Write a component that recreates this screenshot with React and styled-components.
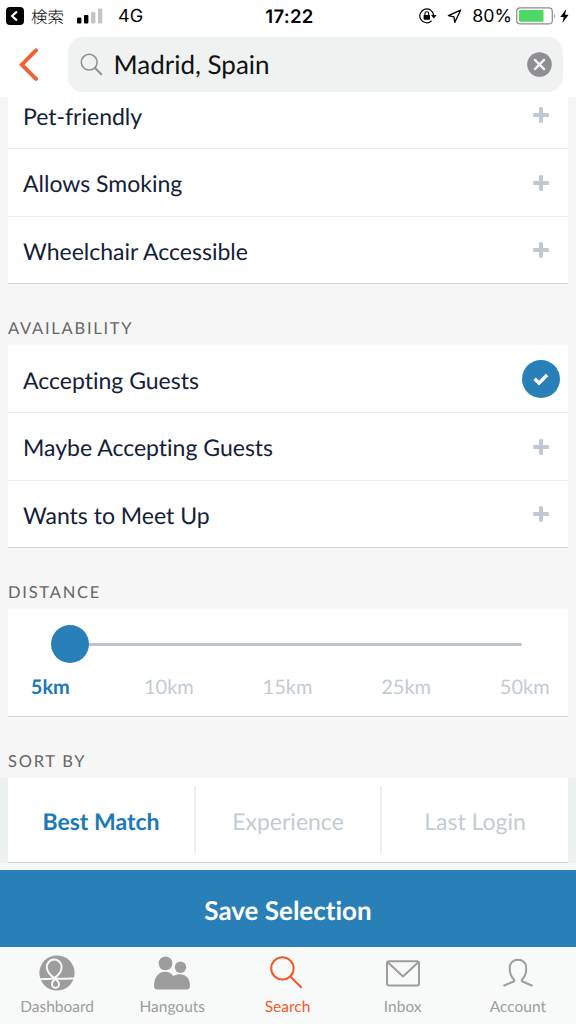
import { useState } from "react";
import styled, { createGlobalStyle } from "styled-components";

const amenities = ["Pet-friendly", "Allows Smoking", "Wheelchair Accessible"];
const availability = [
    "Accepting Guests",
    "Maybe Accepting Guests",
    "Wants to Meet Up",
];
const distances = ["5km", "10km", "15km", "25km", "50km"];
const sorts = ["Best Match", "Experience", "Last Login"];

const StatusBar = () => (
    <StatusContainer>
        <StatusLeft>
            <svg width="18" height="18" viewBox="0 0 18 18">
                <rect width="18" height="18" rx="4" fill="#000" />
                <path
                    d="M10.9 4.6 6 9l4.9 4.4"
                    fill="none"
                    stroke="#fff"
                    strokeWidth="2.1"
                />
            </svg>
            <BackApp>検索</BackApp>
            <svg width="26" height="16" viewBox="0 0 26 16">
                <rect x="0" y="9.5" width="4.4" height="6" rx="1" />
                <rect x="7" y="7" width="4.4" height="8.5" rx="1" />
                <rect x="14" y="4" width="4.4" height="11.5" rx="1" fill="#c4c4c4" />
                <rect x="20.9" y="0.5" width="4.4" height="15" rx="1" fill="#c4c4c4" />
            </svg>
            <Network>4G</Network>
        </StatusLeft>
        <Clock>17:22</Clock>
        <StatusRight>
            <svg width="18" height="16" viewBox="0 0 18 16">
                <path
                    d="M14.6 7.2A6.9 6.9 0 1 0 12.6 12.8"
                    fill="none"
                    stroke="#000"
                    strokeWidth="1.2"
                />
                <path d="M12 7h5.6l-2.8 3.6z" />
                <rect x="4.6" y="7" width="6.4" height="4.7" rx="0.6" />
                <path
                    d="M5.9 7.4V5.6a1.9 1.9 0 0 1 3.8 0v1.8"
                    fill="none"
                    stroke="#000"
                    strokeWidth="1.1"
                />
            </svg>
            <Arrow width="15" height="15" viewBox="0 0 15 15">
                <path
                    d="M13.6 1.2 1.4 6.6l5.6 1.2.7 5.6z"
                    fill="none"
                    stroke="#000"
                    strokeWidth="1.3"
                    strokeLinejoin="round"
                />
            </Arrow>
            <Percent>80%</Percent>
            <svg width="40" height="18" viewBox="0 0 40 18">
                <rect
                    x="0.7"
                    y="0.9"
                    width="35.6"
                    height="16"
                    rx="3.5"
                    fill="#fff"
                    stroke="#8c8c8c"
                    strokeWidth="1.2"
                />
                <rect x="3" y="3" width="24.5" height="11.8" rx="1" fill="#4cd964" />
                <path d="M38 6.2q1.8 2.8 0 5.6z" fill="#777" />
            </svg>
            <Bolt width="9" height="14" viewBox="0 0 9 14">
                <path d="M6.2 0 .3 8h3.4L2.4 14 8.6 5.8H5.1z" />
            </Bolt>
        </StatusRight>
    </StatusContainer>
);

const PlusIcon = () => (
    <svg width="16" height="16" viewBox="0 0 16 16">
        <path d="M8 0.2v15.6M0.2 8h15.6" stroke="#bfc9d1" strokeWidth="4" />
    </svg>
);

const CheckIcon = () => (
    <svg width="16" height="13" viewBox="0 0 16 13">
        <path
            d="M1.7 5.8 6 10.1 14.1 2"
            fill="none"
            stroke="#fff"
            strokeWidth="3.4"
        />
    </svg>
);

const OptionList = ({ options, selected, onToggle }) => (
    <Card>
        {options.map((option) => (
            <OptionRow key={option} onClick={() => onToggle(option)}>
                <span>{option}</span>
                <Toggle $checked={selected.includes(option)}>
                    {selected.includes(option) ? <CheckIcon /> : <PlusIcon />}
                </Toggle>
            </OptionRow>
        ))}
    </Card>
);

const icons = {
    Dashboard: (
        <svg width="36" height="36" viewBox="0 0 36 36">
            <circle cx="18" cy="18" r="17.6" fill="#9d9d9d" />
            <path
                d="M1 24.2C7 23.8 12 24.4 15.4 22.8C19 20.6 22.6 16.5 22.6 12A7.4 7.4 0 0 0 7.8 12C7.8 16.500 11.500 20.200 14.600 22.600C17.500 24.600 20 26.700 20 29.300A3.500 3.500 0 0 1 13 29.300C13 26.700 15 24.600 17.800 23.500C22 24.200 28 23.700 35 23.400"
                fill="none"
                stroke="#f8f8f8"
                strokeWidth="2"
            />
        </svg>
    ),
    Hangouts: (
        <svg width="36" height="36" viewBox="0 0 36 36" fill="#9d9d9d">
            <circle cx="11.5" cy="8.3" r="6.9" />
            <circle cx="26.5" cy="12.2" r="5.7" />
            <path d="M0 31C0 22.5 4.5 16.8 11 16.8c3.6 0 6.5 1.5 8.4 4.2 1.800-1.200 4-1.700 6.300-1.700 6 0 10.300 4 10.300 11.700q0 3.400-3.400 3.400H3.400Q0 34.400 0 31z" />
        </svg>
    ),
    Search: (
        <svg width="36" height="36" viewBox="0 0 36 36">
            <g fill="none" stroke="#f1592a" strokeWidth="2" strokeLinecap="round">
                <circle cx="13.4" cy="13.4" r="11.2" />
                <path d="m21.3 21.5 10.9 10.7" />
            </g>
        </svg>
    ),
    Inbox: (
        <svg width="36" height="36" viewBox="0 0 36 36">
            <g
                fill="none"
                stroke="#9d9d9d"
                strokeWidth="2"
                strokeLinejoin="round"
            >
                <rect x="2" y="6.3" width="32" height="24.2" rx="2.2" />
                <path d="M3 7.5 18 21.5 33 7.5" />
            </g>
        </svg>
    ),
    Account: (
        <svg width="36" height="36" viewBox="0 0 36 36">
            <path
                d="M4.3 30.5 13.5 26.5C14.8 25.9 14.5 25 13.7 24.2C11 21.5 9.8 18.5 9.8 14.5V12.3C9.8 8 13 4.8 18 4.8S26.2 8 26.2 12.3V14.5C26.2 18.5 25 21.5 22.3 24.2C21.5 25 21.2 25.9 22.5 26.5L31.7 30.5"
                fill="none"
                stroke="#9d9d9d"
                strokeWidth="2"
                strokeLinecap="round"
            />
        </svg>
    ),
};

const App = () => {
    const [selected, setSelected] = useState(["Accepting Guests"]);
    const [distance, setDistance] = useState(0);
    const [sort, setSort] = useState("Best Match");
    const [tab, setTab] = useState("Search");

    const handleToggle = (option) => {
        setSelected((prev) =>
            prev.includes(option)
                ? prev.filter((item) => item !== option)
                : [...prev, option]
        );
    };

    return (
        <Container>
            <GlobalStyle />
            <StatusBar />
            <Header>
                <svg width="20" height="34" viewBox="0 0 20 34">
                    <path
                        d="M17 2.4 2.8 16.7 17 30.8"
                        fill="none"
                        stroke="#ef6237"
                        strokeWidth="4"
                        strokeLinecap="round"
                    />
                </svg>
                <SearchBox>
                    <svg width="23" height="23" viewBox="0 0 23 23">
                        <g fill="none" stroke="#8e8e93" strokeLinecap="round">
                            <circle cx="9.2" cy="9.2" r="7.9" strokeWidth="1.5" />
                            <path d="m15 15 6.2 6.2" strokeWidth="2" />
                        </g>
                    </svg>
                    <Query>Madrid, Spain</Query>
                    <svg width="25" height="25" viewBox="0 0 25 25">
                        <circle cx="12.5" cy="12.5" r="12.3" fill="#8e8e93" />
                        <path
                            d="m7.9 7.9 9.2 9.2m0-9.2-9.2 9.2"
                            stroke="#f3f4f4"
                            strokeWidth="2.3"
                            strokeLinecap="round"
                        />
                    </svg>
                </SearchBox>
            </Header>
            <Filters>
                <OptionList
                    options={amenities}
                    selected={selected}
                    onToggle={handleToggle}
                />
                <Label>AVAILABILITY</Label>
                <OptionList
                    options={availability}
                    selected={selected}
                    onToggle={handleToggle}
                />
                <Label>DISTANCE</Label>
                <DistanceCard>
                    <Slider>
                        <Track />
                        <Thumb style={{ left: `${distance * 25}%` }} />
                    </Slider>
                    <Stops>
                        {distances.map((label, i) => (
                            <Stop
                                key={label}
                                $active={i === distance}
                                onClick={() => setDistance(i)}
                            >
                                {label}
                            </Stop>
                        ))}
                    </Stops>
                </DistanceCard>
                <Label>SORT BY</Label>
                <SortBand>
                    <SortCard>
                        {sorts.map((label) => (
                            <SortItem
                                key={label}
                                $active={label === sort}
                                onClick={() => setSort(label)}
                            >
                                {label}
                            </SortItem>
                        ))}
                    </SortCard>
                </SortBand>
            </Filters>
            <SaveButton>Save Selection</SaveButton>
            <TabBar>
                {Object.keys(icons).map((name) => (
                    <Tab
                        key={name}
                        $active={name === tab}
                        onClick={() => setTab(name)}
                    >
                        {icons[name]}
                        <span>{name}</span>
                    </Tab>
                ))}
            </TabBar>
        </Container>
    );
};

export default App;

const GlobalStyle = createGlobalStyle`
    * {
        box-sizing: border-box;
    }

    body {
        margin: 0;
        font-family: Lato, "Noto Sans CJK JP", sans-serif;
        font-variant-ligatures: none;
        text-rendering: geometricPrecision;
    }

    button {
        border: none;
        padding: 0;
        background: none;
        font-family: inherit;
        font-variant-ligatures: inherit;
        text-rendering: inherit;
    }

    svg {
        display: block;
        flex-shrink: 0;
    }
`;

const Container = styled.div`
    display: flex;
    flex-direction: column;
    width: 576px;
    height: 1024px;
    overflow: hidden;
    background: #fff;
`;

const StatusContainer = styled.div`
    display: grid;
    grid-template-columns: 1fr auto 1fr;
    align-items: center;
    height: 32px;
    padding: 0 7px 0 6px;
    font-family: Inter, "Noto Sans CJK JP", sans-serif;
    color: #000;
`;

const StatusLeft = styled.div`
    display: flex;
    align-items: center;
`;

const StatusRight = styled.div`
    display: flex;
    align-items: center;
    justify-content: flex-end;
`;

const BackApp = styled.span`
    margin: 0 13px 0 7px;
    font-family: "Noto Sans CJK JP", sans-serif;
    font-size: 16.5px;
    font-weight: 300;
    line-height: 24px;
`;

const Network = styled.span`
    margin-left: 15px;
    padding-top: 1px;
    font-size: 18px;
    line-height: 24px;
`;

const Clock = styled.span`
    padding: 1px 0 0 4px;
    font-size: 18.5px;
    font-weight: 600;
    letter-spacing: 0.3px;
    line-height: 24px;
`;

const Arrow = styled.svg`
    margin: 0 10px 0 10px;
`;

const Percent = styled.span`
    margin-right: 4px;
    padding-top: 1px;
    font-size: 17.8px;
    line-height: 24px;
`;

const Bolt = styled.svg`
    margin-left: 4px;
`;

const Header = styled.div`
    display: flex;
    align-items: center;
    justify-content: space-between;
    height: 65px;
    padding: 0 13px 0 19px;
`;

const SearchBox = styled.div`
    display: flex;
    align-items: center;
    width: 495.5px;
    height: 55px;
    padding: 0 11px 0 12px;
    border-radius: 15px;
    background: #f0f2f1;
`;

const Query = styled.span`
    flex: 1;
    margin: -2px 0 0 11px;
    font-size: 26px;
    color: #111;
`;

const Filters = styled.div`
    display: flex;
    flex: 1;
    flex-direction: column;
    justify-content: flex-end;
    min-height: 0;
    padding-bottom: 7px;
    overflow: hidden;
    background: #f6f6f6;
`;

const Card = styled.div`
    flex-shrink: 0;
    margin: 0 8px;
    border-bottom: 1px solid #cdd5d8;
    background: #fff;
`;

const OptionRow = styled.div`
    display: flex;
    align-items: center;
    justify-content: space-between;
    height: 67px;
    padding: 2px 8px 0 15px;
    font-size: 23px;
    color: #132039;

    & + & {
        height: 67.5px;
        border-top: 1px solid #ebeded;
    }

    &:last-child {
        height: 67px;
    }
`;

const Toggle = styled.button`
    display: flex;
    align-items: center;
    justify-content: center;
    width: 38px;
    height: 38px;
    margin-top: -1px;
    border-radius: 50%;
    background: ${({ $checked }) => ($checked ? "#2980b9" : "transparent")};
`;

const Label = styled.div`
    flex-shrink: 0;
    height: 61.5px;
    padding: 34px 8px 0;
    font-size: 16.5px;
    line-height: 20px;
    letter-spacing: 1.75px;
    color: #666;
`;

const DistanceCard = styled(Card)`
    height: 107.5px;
    padding-top: 15.5px;
`;

const Slider = styled.div`
    position: relative;
    display: flex;
    align-items: center;
    height: 38px;
    margin: 0 46px 0 62px;
`;

const Track = styled.div`
    width: 100%;
    height: 3px;
    margin-top: 2px;
    border-radius: 2px;
    background: #b9c4cd;
`;

const Thumb = styled.div`
    position: absolute;
    top: 0;
    width: 38px;
    height: 38px;
    margin-left: -19px;
    border-radius: 50%;
    background: #2980b9;
`;

const Stops = styled.div`
    display: grid;
    grid-template-columns: repeat(5, 118.6px);
    justify-content: center;
    margin: 12px 1px 0 0;
`;

const Stop = styled.span`
    font-size: 20px;
    line-height: 24px;
    text-align: center;
    font-weight: ${({ $active }) => ($active ? 700 : 400)};
    color: ${({ $active }) => ($active ? "#1b79b8" : "#c2cbd3")};
`;

const SortBand = styled.div`
    flex-shrink: 0;
    background: #ecf0f1;
`;

const SortCard = styled(Card)`
    display: grid;
    grid-template-columns: 186px 186px 1fr;
    height: 85px;
    padding: 8px 0 7px;
`;

const SortItem = styled.div`
    display: flex;
    align-items: center;
    justify-content: center;
    padding-top: 1px;
    font-size: 23px;
    font-weight: ${({ $active }) => ($active ? 700 : 400)};
    color: ${({ $active }) => ($active ? "#1b79b8" : "#c2cbd3")};

    & + & {
        border-left: 2px solid #ecf0f1;
    }
`;

const SaveButton = styled.button`
    height: 77px;
    padding-top: 3px;
    background: #2980b9;
    font-size: 26px;
    font-weight: 700;
    color: #fff;
`;

const TabBar = styled.nav`
    display: grid;
    grid-template-columns: repeat(5, 1fr);
    height: 77px;
    background: #f8f9f9;
`;

const Tab = styled.div`
    display: flex;
    flex-direction: column;
    align-items: center;
    padding: 8px 1px 0 0;
    font-size: 15.5px;
    line-height: 20px;
    color: ${({ $active }) => ($active ? "#f1592a" : "#9d9d9d")};

    span {
        margin-top: 6px;
    }
`;
